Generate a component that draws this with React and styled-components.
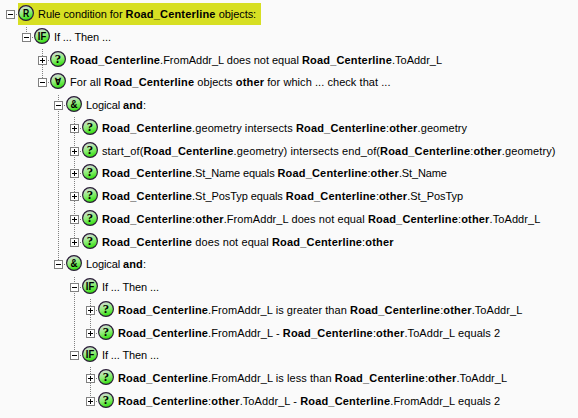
import React from "react";
import styled, { createGlobalStyle, css } from "styled-components";

const GlobalStyle = createGlobalStyle`
  body { margin: 0; background: #fafafa; }
`;

const dots = css`
  background-image: repeating-linear-gradient(to bottom, transparent 0 1px, #808080 1px 2px);
  background-attachment: fixed;
`;

const Tree = styled.div`
  box-sizing: border-box;
  width: 578px;
  height: 418px;
  padding: 3px 0 0 2px;
  background: #fafafa;
  font: 11px "Liberation Sans", Arial, sans-serif;
  color: #000;
  overflow: hidden;
`;

const Row = styled.div`
  display: flex;
  height: ${(p) => p.$height}px;
`;

const Guide = styled.div`
  flex: none;
  width: 1px;
  margin: 0 7px 0 8px;
  ${(p) => p.$on && dots}
`;

const Branch = styled.div`
  flex: none;
  display: flex;
  flex-direction: column;
  align-items: center;
  width: 9px;
  margin-left: 4px;
`;

const Stem = styled.div`
  width: 1px;
  height: ${(p) => (p.$grow ? "auto" : "7px")};
  flex: ${(p) => (p.$grow ? "1" : "none")};
  ${(p) => p.$on && dots}
`;

const Expander = styled.svg`
  flex: none;
  display: block;
  width: 9px;
  height: 9px;
`;

const Connector = styled.div`
  flex: none;
  width: 3px;
  height: 1px;
  margin-top: 11px;
  background: linear-gradient(to right, transparent 0 1px, #808080 1px 2px, transparent 2px);
`;

const Content = styled.div`
  display: flex;
  height: 22px;
  padding-right: 5px;
  background: ${(p) => (p.$selected ? "#d7df23" : "transparent")};
`;

const Badge = styled.svg`
  flex: none;
  display: block;
  width: 16px;
  height: 16px;
  margin: 2px 4px 0 0;
  overflow: visible;
`;

const Label = styled.span`
  white-space: pre;
  line-height: 22px;
  letter-spacing: ${(p) => p.$spacing || 0}px;

  b {
    letter-spacing: 0.18px;
  }
`;

const glyphs = {
  R: { size: 10.5, y: 11.8, family: "Liberation Sans", length: 6.2 },
  IF: { size: 10.5, y: 11.8, family: "Liberation Sans", length: 8.4 },
  "?": { size: 12.5, y: 12, family: "Liberation Serif", length: 6.4 },
  "∀": { size: 9.8, y: 11.5, family: "DejaVu Sans", length: 6.4 },
  "&": { size: 10, y: 11.5, family: "Liberation Sans", length: 7 },
};

function NodeBadge({ kind }) {
  const g = glyphs[kind];
  return (
    <Badge viewBox="0 0 16 16">
      <circle cx="8" cy="8" r="7.4" fill="url(#ball)" stroke="#2b1d38" strokeWidth="1.2" />
      <text
        x="8"
        y={g.y}
        textAnchor="middle"
        fontFamily={g.family}
        fontSize={g.size}
        fontWeight="700"
        textLength={g.length}
        lengthAdjust="spacingAndGlyphs"
      >
        {kind}
      </text>
    </Badge>
  );
}

function Toggle({ open }) {
  return (
    <Expander viewBox="0 0 9 9" shapeRendering="crispEdges">
      <rect x="0.5" y="0.5" width="8" height="8" fill="#fff" stroke="#808080" />
      <path d={open ? "M2 4.5h5" : "M2 4.5h5M4.5 2v5"} stroke="#000" />
    </Expander>
  );
}

const RC = <b>Road_Centerline</b>;
const OTHER = <b>other</b>;
const RCO = <>{RC}:{OTHER}</>;

const rows = [
  { depth: 0, icon: "R", open: true, text: <>Rule condition for {RC} objects:</>, selected: true, spacing: -0.06 },
  { depth: 1, icon: "IF", open: true, text: "If ... Then ...", spacing: -0.11 },
  { depth: 2, icon: "?", text: <>{RC}.FromAddr_L does not equal {RC}.ToAddr_L</>, spacing: -0.01 },
  { depth: 2, icon: "∀", open: true, text: <>For all {RC} objects {OTHER} for which ... check that ...</>, spacing: 0.06 },
  { depth: 3, icon: "&", open: true, text: <>Logical <b>and</b>:</>, spacing: -0.13 },
  { depth: 4, icon: "?", text: <>{RC}.geometry intersects {RCO}.geometry</>, spacing: 0.08 },
  { depth: 4, icon: "?", text: <>start_of({RC}.geometry) intersects end_of({RCO}.geometry)</>, spacing: 0.12 },
  { depth: 4, icon: "?", text: <>{RC}.St_Name equals {RCO}.St_Name</>, spacing: -0.13 },
  { depth: 4, icon: "?", text: <>{RC}.St_PosTyp equals {RCO}.St_PosTyp</>, spacing: -0.06 },
  { depth: 4, icon: "?", text: <>{RCO}.FromAddr_L does not equal {RCO}.ToAddr_L</>, spacing: 0.08 },
  { depth: 4, icon: "?", text: <>{RC} does not equal {RCO}</>, spacing: 0.1 },
  { depth: 3, icon: "&", open: true, text: <>Logical <b>and</b>:</>, spacing: -0.13 },
  { depth: 4, icon: "IF", open: true, text: "If ... Then ...", spacing: -0.11 },
  { depth: 5, icon: "?", text: <>{RC}.FromAddr_L is greater than {RCO}.ToAddr_L</>, spacing: 0.06 },
  { depth: 5, icon: "?", text: <>{RC}.FromAddr_L - {RCO}.ToAddr_L equals 2</>, spacing: 0.08 },
  { depth: 4, icon: "IF", open: true, text: "If ... Then ...", spacing: -0.11 },
  { depth: 5, icon: "?", text: <>{RC}.FromAddr_L is less than {RCO}.ToAddr_L</>, spacing: 0.07 },
  { depth: 5, icon: "?", text: <>{RCO}.ToAddr_L - {RC}.FromAddr_L equals 2</>, spacing: 0.08 },
];

function continues(index, depth) {
  for (let i = index + 1; i < rows.length; i += 1) {
    if (rows[i].depth < depth) return false;
    if (rows[i].depth === depth) return true;
  }
  return false;
}

const Defs = styled.svg`
  display: block;
  width: 0;
  height: 0;
`;

export default function App() {
  return (
    <Tree>
      <GlobalStyle />
      {rows.map((row, i) => (
        <Row key={i} $height={i % 4 === 2 ? 22 : 23}>
          {Array.from({ length: row.depth }, (_, d) => (
            <Guide key={d} $on={continues(i, d)} />
          ))}
          <Branch>
            <Stem $on={row.depth > 0} />
            <Toggle open={row.open} />
            <Stem $grow $on={continues(i, row.depth)} />
          </Branch>
          <Connector />
          <Content $selected={row.selected}>
            <NodeBadge kind={row.icon} />
            <Label $spacing={row.spacing}>{row.text}</Label>
          </Content>
        </Row>
      ))}
      <Defs>
        <defs>
          <linearGradient id="ball" x1="0.1" y1="0" x2="0.4" y2="1">
            <stop offset="0" stopColor="#d6d4dc" />
            <stop offset="0.25" stopColor="#bfe2ba" />
            <stop offset="0.55" stopColor="#90ee78" />
            <stop offset="1" stopColor="#38e014" />
          </linearGradient>
        </defs>
      </Defs>
    </Tree>
  );
}
